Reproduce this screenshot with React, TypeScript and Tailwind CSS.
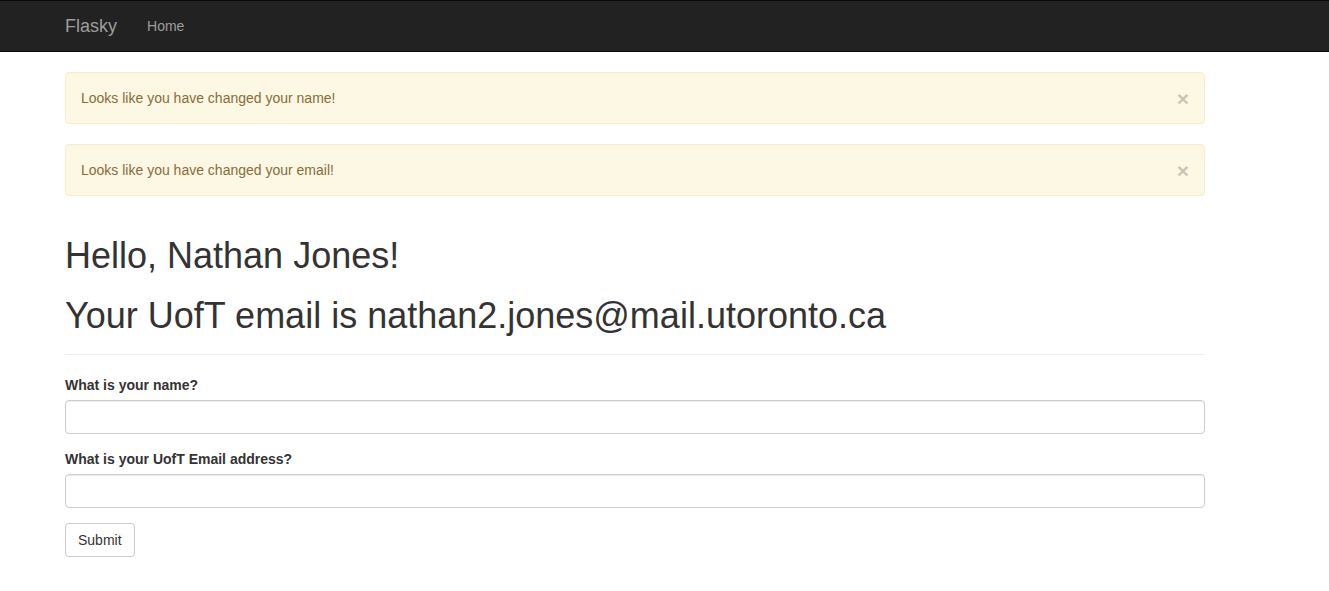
export default function App() {
  const alerts = [
    "Looks like you have changed your name!",
    "Looks like you have changed your email!",
  ];

  return (
    <div className="min-h-screen bg-white font-['Liberation_Sans',Arial,sans-serif] text-[14px] leading-[20px] text-[#333]">
      <nav className="h-[52px] bg-[#222] border-y border-[#080808]">
        <div className="ml-[50px] w-[1170px] px-[15px] flex">
          <a className="-ml-[15px] h-[50px] p-[15px] text-[18px] leading-[20px] text-[#9d9d9d]">Flasky</a>
          <ul className="flex">
            <li>
              <a className="block px-[15px] py-[15px] text-[14px] leading-[20px] text-[#9d9d9d]">Home</a>
            </li>
          </ul>
        </div>
      </nav>

      <div className="ml-[50px] w-[1170px] px-[15px] pt-[20px]">
        {alerts.map((msg) => (
          <div
            key={msg}
            className="mb-[20px] flex h-[52px] items-start justify-between rounded-[4px] border border-[#faebcc] bg-[#fcf8e3] p-[15px] pr-[15px] text-[#8a6d3b]"
          >
            <span>{msg}</span>
            <button className="relative top-0 h-[20px] text-[21px] font-bold leading-none text-black opacity-20 [text-shadow:0_1px_0_#fff]">
              ×
            </button>
          </div>
        ))}

        <div className="mt-[40px] border-b border-[#eee] pb-[9px]">
          <h1 className="text-[36px] font-normal leading-[1.1] text-[#333]">Hello, Nathan Jones!</h1>
          <h1 className="mt-[20px] mb-[10px] text-[36px] font-normal leading-[1.1] text-[#333]">
            Your UofT email is nathan2.jones@mail.utoronto.ca
          </h1>
        </div>

        <form className="mt-[20px]">
          <div className="mb-[15px]">
            <label className="mb-[5px] inline-block font-bold">What is your name?</label>
            <input
              type="text"
              className="block h-[34px] w-full rounded-[4px] border border-[#ccc] px-[12px] py-[6px] shadow-[inset_0_1px_1px_rgba(0,0,0,0.075)] outline-none"
            />
          </div>
          <div className="mb-[15px]">
            <label className="mb-[5px] inline-block font-bold">What is your UofT Email address?</label>
            <input
              type="text"
              className="block h-[34px] w-full rounded-[4px] border border-[#ccc] px-[12px] py-[6px] shadow-[inset_0_1px_1px_rgba(0,0,0,0.075)] outline-none"
            />
          </div>
          <button
            type="button"
            className="rounded-[4px] border border-[#ccc] bg-white px-[12px] py-[6px] text-[14px] leading-[20px] text-[#333]"
          >
            Submit
          </button>
        </form>
      </div>
    </div>
  );
}
